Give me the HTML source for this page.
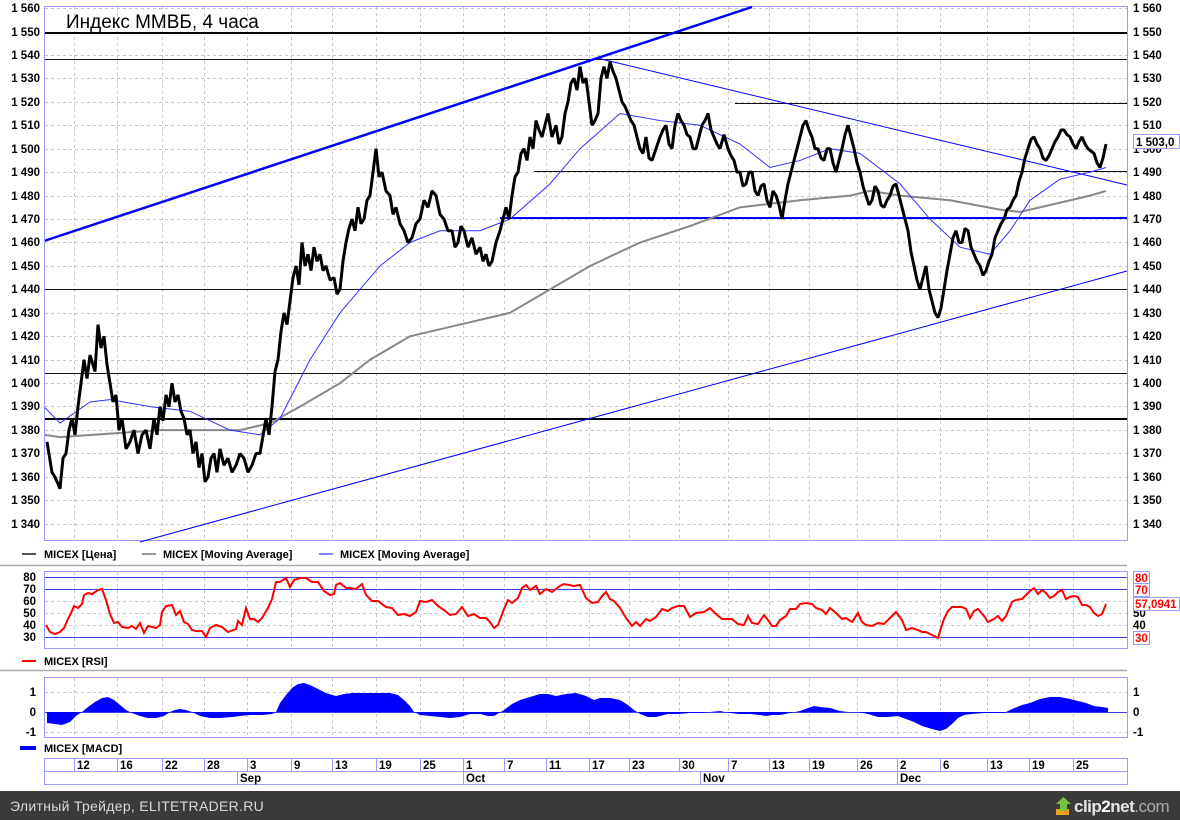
<!DOCTYPE html>
<html><head><meta charset="utf-8"><style>
html,body{margin:0;padding:0;width:1180px;height:820px;overflow:hidden;background:#fff}
svg{display:block}
text{font-family:"Liberation Sans",sans-serif}
.ax{font-size:11.5px;font-weight:bold;fill:#000}
.lg{font-size:11px;font-weight:bold;fill:#000}
</style></head><body>
<svg width="1180" height="820" viewBox="0 0 1180 820" xmlns="http://www.w3.org/2000/svg">
<rect width="1180" height="820" fill="#fff"/>
<rect x="44.5" y="6.5" width="1083" height="534" fill="none" stroke="#9a9aff"/>
<g stroke="#c8c8c8" stroke-dasharray="3,3" stroke-width="1">
<path d="M74.5 7V540M117.5 7V540M162.5 7V540M204.5 7V540M247.5 7V540M291.5 7V540M332.5 7V540M376.5 7V540M420.5 7V540M463.5 7V540M504.5 7V540M546.5 7V540M589.5 7V540M629.5 7V540M679.5 7V540M728.5 7V540M769.5 7V540M809.5 7V540M857.5 7V540M897.5 7V540M940.5 7V540M987.5 7V540M1029.5 7V540M1073.5 7V540"/>
<path d="M45 8.5H1127M45 55.5H1127M45 78.5H1127M45 102.5H1127M45 125.5H1127M45 149.5H1127M45 172.5H1127M45 196.5H1127M45 219.5H1127M45 242.5H1127M45 266.5H1127M45 289.5H1127M45 313.5H1127M45 336.5H1127M45 360.5H1127M45 383.5H1127M45 406.5H1127M45 430.5H1127M45 453.5H1127M45 477.5H1127M45 500.5H1127M45 524.5H1127"/>
</g>
<g fill="none">
<path d="M45 33H1127" stroke="#000" stroke-width="2"/>
<path d="M45 59.5H1127" stroke="#111" stroke-width="1"/>
<path d="M735 103.5H1127" stroke="#111"/>
<path d="M534 171.5H1127" stroke="#111"/>
<path d="M500 218H1127" stroke="#0000ff" stroke-width="2"/>
<path d="M45 289.5H1127" stroke="#111"/>
<path d="M45 373.5H1127" stroke="#111"/>
<path d="M45 419H1127" stroke="#000" stroke-width="2"/>
<path d="M44 241L752 7" stroke="#0000ff" stroke-width="2.5"/>
<path d="M597 58L1127 185" stroke="#0000ff" stroke-width="1"/>
<path d="M140 542L1127 271" stroke="#0000ff" stroke-width="1"/>
</g>
<g transform="translate(0,3666.2) scale(1,-2.345)" fill="none">
<polyline vector-effect="non-scaling-stroke" stroke="#888" stroke-width="2" points="44,1378 60,1377 160,1380 240,1380 270,1383 300,1390 340,1400 370,1410 410,1420 460,1425 510,1430 550,1440 590,1450 640,1460 690,1467 740,1475 800,1478 850,1480 870,1482 900,1480 950,1478 1000,1474 1020,1473 1050,1476 1090,1480 1106,1482"/>
<polyline vector-effect="non-scaling-stroke" stroke="#3030ff" stroke-width="1" points="44,1390 60,1383 90,1392 110,1393 150,1390 190,1388 230,1380 260,1378 280,1385 310,1410 340,1430 380,1450 410,1460 440,1465 480,1465 510,1470 550,1485 580,1500 620,1515 660,1512 700,1510 740,1502 770,1492 800,1495 830,1500 860,1498 900,1485 930,1470 960,1458 990,1455 1010,1465 1030,1478 1060,1487 1090,1490 1106,1492"/>
<polyline vector-effect="non-scaling-stroke" stroke="#000" stroke-width="3" stroke-linejoin="bevel" points="47,1375 52,1362 55,1360 60,1355 63,1368 66,1370 69,1380 72,1385 75,1378 78,1390 84,1410 87,1402 90,1412 95,1405 98,1425 101,1415 104,1420 107,1408 110,1400 113,1392 116,1395 119,1380 122,1385 126,1372 130,1375 134,1380 138,1370 142,1378 146,1380 150,1372 154,1385 157,1378 160,1390 163,1384 166,1395 169,1390 172,1400 175,1392 178,1395 181,1388 184,1385 187,1378 190,1380 193,1370 196,1375 199,1364 202,1370 205,1358 208,1360 211,1368 214,1370 217,1362 220,1372 224,1365 228,1368 232,1362 236,1365 240,1370 244,1368 248,1362 252,1365 256,1370 260,1370 264,1380 266,1385 269,1378 272,1390 275,1405 278,1410 281,1422 284,1430 287,1425 290,1435 293,1445 296,1450 299,1442 302,1460 305,1450 308,1455 311,1448 314,1458 317,1452 320,1455 323,1448 326,1450 330,1444 334,1445 337,1438 340,1440 343,1452 346,1460 349,1466 352,1470 355,1465 358,1475 361,1468 364,1470 367,1478 370,1480 373,1490 376,1500 379,1488 382,1490 386,1482 390,1480 393,1472 396,1475 400,1468 404,1465 408,1460 412,1462 416,1468 420,1470 424,1478 428,1475 432,1482 436,1480 440,1472 444,1470 448,1465 452,1465 455,1458 458,1460 461,1467 464,1465 468,1458 472,1462 476,1455 480,1458 483,1452 486,1455 489,1450 492,1452 496,1460 500,1465 503,1470 506,1475 509,1470 512,1480 515,1488 518,1490 521,1498 524,1500 527,1495 530,1505 533,1500 536,1512 539,1508 542,1505 545,1510 548,1515 552,1505 556,1510 559,1502 562,1505 565,1515 568,1520 571,1528 574,1530 577,1525 580,1535 583,1528 586,1530 589,1520 592,1510 595,1512 598,1515 601,1530 604,1535 607,1530 610,1537 613,1533 616,1530 619,1525 622,1520 625,1518 628,1515 631,1512 634,1510 637,1505 640,1500 643,1498 646,1505 649,1496 652,1495 656,1500 660,1505 663,1508 666,1510 669,1502 672,1500 675,1510 678,1515 681,1512 684,1510 687,1506 690,1505 693,1500 696,1500 699,1505 702,1510 705,1512 708,1515 711,1508 714,1505 717,1502 720,1500 724,1506 728,1500 731,1497 734,1495 737,1490 740,1490 743,1484 746,1485 749,1490 752,1490 755,1482 758,1480 761,1484 764,1485 767,1478 770,1475 773,1482 776,1480 779,1476 782,1470 785,1478 788,1485 791,1490 794,1495 797,1500 800,1505 803,1510 806,1512 809,1508 812,1505 815,1500 818,1500 821,1496 824,1495 827,1500 830,1500 833,1494 836,1490 839,1495 842,1500 845,1506 848,1510 851,1505 854,1500 857,1494 860,1490 863,1484 866,1480 869,1476 872,1478 875,1484 878,1482 881,1476 884,1475 887,1478 890,1480 893,1484 896,1485 899,1480 902,1475 905,1470 908,1465 911,1456 914,1450 917,1444 920,1440 923,1445 926,1450 929,1440 932,1435 935,1430 938,1428 941,1432 944,1440 947,1448 950,1455 953,1462 956,1465 959,1460 962,1460 965,1466 968,1465 971,1458 974,1455 977,1452 980,1450 983,1446 986,1448 989,1452 992,1455 995,1462 998,1465 1001,1468 1004,1470 1007,1474 1010,1475 1013,1478 1016,1480 1019,1486 1022,1490 1025,1496 1028,1500 1031,1504 1034,1505 1037,1502 1040,1500 1043,1496 1046,1495 1049,1497 1052,1500 1055,1503 1058,1505 1061,1508 1064,1508 1067,1506 1070,1505 1073,1502 1076,1500 1079,1503 1082,1505 1085,1502 1088,1500 1091,1499 1094,1498 1097,1494 1100,1492 1103,1496 1106,1502"/>
</g>
<text x="66" y="28" font-size="19" fill="#000">Индекс ММВБ, 4 часа</text>
<g stroke="#9a9aff"><path d="M44.5 6V541M1127.5 6V541"/></g>
<g class="ax" text-anchor="end">
<text x="40" y="12">1 560</text><text x="40" y="36">1 550</text><text x="40" y="59">1 540</text><text x="40" y="82">1 530</text><text x="40" y="106">1 520</text><text x="40" y="129">1 510</text><text x="40" y="153">1 500</text><text x="40" y="176">1 490</text><text x="40" y="200">1 480</text><text x="40" y="223">1 470</text><text x="40" y="246">1 460</text><text x="40" y="270">1 450</text><text x="40" y="293">1 440</text><text x="40" y="317">1 430</text><text x="40" y="340">1 420</text><text x="40" y="364">1 410</text><text x="40" y="387">1 400</text><text x="40" y="410">1 390</text><text x="40" y="434">1 380</text><text x="40" y="457">1 370</text><text x="40" y="481">1 360</text><text x="40" y="504">1 350</text><text x="40" y="528">1 340</text>
</g>
<g class="ax">
<text x="1133" y="12">1 560</text><text x="1133" y="36">1 550</text><text x="1133" y="59">1 540</text><text x="1133" y="82">1 530</text><text x="1133" y="106">1 520</text><text x="1133" y="129">1 510</text><text x="1133" y="153">1 500</text><text x="1133" y="176">1 490</text><text x="1133" y="200">1 480</text><text x="1133" y="223">1 470</text><text x="1133" y="246">1 460</text><text x="1133" y="270">1 450</text><text x="1133" y="293">1 440</text><text x="1133" y="317">1 430</text><text x="1133" y="340">1 420</text><text x="1133" y="364">1 410</text><text x="1133" y="387">1 400</text><text x="1133" y="410">1 390</text><text x="1133" y="434">1 380</text><text x="1133" y="457">1 370</text><text x="1133" y="481">1 360</text><text x="1133" y="504">1 350</text><text x="1133" y="528">1 340</text>
</g>
<rect x="1133.5" y="134.5" width="46" height="14" fill="#fff" stroke="#9a9aff"/>
<text x="1136" y="146" class="ax">1 503,0</text>
<path d="M22 554H36" stroke="#555" stroke-width="2"/><text x="44" y="558" class="lg">MICEX [Цена]</text>
<path d="M142 554H156" stroke="#999" stroke-width="2"/><text x="163" y="558" class="lg">MICEX [Moving Average]</text>
<path d="M319 554H333" stroke="#8080ff" stroke-width="2"/><text x="340" y="558" class="lg">MICEX [Moving Average]</text>
<path d="M0 565.5H1127" stroke="#aaa" stroke-width="1.5"/>
<rect x="44.5" y="571.5" width="1083" height="77" fill="none" stroke="#9a9aff"/>
<g stroke="#c8c8c8" stroke-dasharray="3,3"><path d="M74.5 572V648M117.5 572V648M162.5 572V648M204.5 572V648M247.5 572V648M291.5 572V648M332.5 572V648M376.5 572V648M420.5 572V648M463.5 572V648M504.5 572V648M546.5 572V648M589.5 572V648M629.5 572V648M679.5 572V648M728.5 572V648M769.5 572V648M809.5 572V648M857.5 572V648M897.5 572V648M940.5 572V648M987.5 572V648M1029.5 572V648M1073.5 572V648M45 601.5H1127M45 613.5H1127M45 625.5H1127"/></g>
<path d="M45 577.5H1127M45 589.5H1127M45 637.5H1127" stroke="#4040e0" stroke-width="1"/>
<polyline fill="none" stroke="#f00" stroke-width="2" points="46,625 50,632 55,634 60,632 64,628 68,619 72,611 74,606 78,608 82,604 84,595 88,593 92,594 98,590 102,589 106,600 110,614 114,623 118,622 122,627 128,628 132,626 136,629 140,623 144,633 148,626 152,627 156,628 160,625 162,612 166,606 172,605 176,615 180,611 184,622 188,624 192,630 196,631 202,631 206,637 210,628 216,625 222,627 228,632 236,629 238,621 242,625 246,608 250,619 254,619 258,622 262,618 268,608 272,599 276,582 280,582 286,578 290,587 294,580 300,578 306,578 312,582 318,582 324,591 330,595 334,594 336,585 340,583 346,588 350,588 356,589 362,584 366,595 372,601 378,601 386,607 392,608 398,615 404,614 410,616 416,612 420,601 426,602 432,600 438,606 444,610 450,615 456,614 462,607 468,616 474,614 480,618 486,618 490,622 494,628 498,625 504,609 508,600 512,603 518,598 522,588 526,585 530,590 536,586 540,594 546,589 552,592 560,586 564,584 574,586 580,585 586,598 592,603 598,602 602,596 606,592 610,599 614,601 620,608 626,618 632,626 636,622 640,626 646,619 650,621 656,617 662,609 668,611 672,608 678,606 684,606 690,617 696,613 704,612 710,608 716,614 722,619 726,619 732,619 738,624 744,625 748,616 752,623 758,624 764,615 768,620 772,626 776,626 780,620 786,616 790,609 796,609 800,604 806,603 812,604 816,608 822,610 826,614 830,608 836,613 842,619 846,618 852,622 858,613 862,622 866,625 872,626 878,623 884,624 890,618 896,612 902,620 906,630 912,628 918,630 922,632 926,632 932,635 938,638 940,631 944,619 948,611 952,607 956,607 962,607 966,609 970,618 974,611 978,609 984,616 988,622 994,619 998,616 1002,621 1006,616 1012,602 1016,600 1022,599 1026,595 1030,591 1034,588 1038,594 1042,590 1046,593 1050,598 1054,596 1058,592 1062,590 1066,599 1070,597 1074,596 1078,597 1082,605 1086,605 1090,607 1094,613 1098,616 1102,614 1106,604"/>
<g class="ax" text-anchor="end"><text x="36" y="581">80</text><text x="36" y="593">70</text><text x="36" y="605">60</text><text x="36" y="617">50</text><text x="36" y="629">40</text><text x="36" y="641">30</text></g>
<g class="ax"><text x="1133" y="617">50</text><text x="1133" y="629">40</text></g>
<g font-size="11.5" font-weight="bold" fill="#f00">
<rect x="1133.5" y="571.5" width="16" height="13" fill="#fff" stroke="#9a9aff"/><text x="1135" y="582">80</text>
<rect x="1133.5" y="583.5" width="16" height="13" fill="#fff" stroke="#9a9aff"/><text x="1135" y="594">70</text>
<rect x="1133.5" y="597.5" width="46" height="13" fill="#fff" stroke="#9a9aff"/><text x="1135" y="608">57,0941</text>
<rect x="1133.5" y="631.5" width="16" height="13" fill="#fff" stroke="#9a9aff"/><text x="1135" y="642">30</text>
</g>
<path d="M22 661H36" stroke="#f00" stroke-width="2"/><text x="44" y="665" class="lg">MICEX [RSI]</text>
<path d="M0 670.5H1127" stroke="#aaa" stroke-width="1.5"/>
<rect x="44.5" y="677.5" width="1083" height="60" fill="none" stroke="#9a9aff"/>
<g stroke="#c8c8c8" stroke-dasharray="3,3"><path d="M74.5 678V737M117.5 678V737M162.5 678V737M204.5 678V737M247.5 678V737M291.5 678V737M332.5 678V737M376.5 678V737M420.5 678V737M463.5 678V737M504.5 678V737M546.5 678V737M589.5 678V737M629.5 678V737M679.5 678V737M728.5 678V737M769.5 678V737M809.5 678V737M857.5 678V737M897.5 678V737M940.5 678V737M987.5 678V737M1029.5 678V737M1073.5 678V737M45 692.5H1127M45 732.5H1127"/></g>
<path d="M45 712.5H1127" stroke="#4040e0"/>
<polygon fill="#0000ff" points="47,712 47,723 55,724 62,725 70,722 76,716 82,712 88,707 95,702 102,698 108,697 114,700 120,705 126,710 132,713 140,716 148,718 156,718 164,716 170,712 175,710 180,709 186,710 192,712 200,716 210,718 220,718 232,717 240,716 250,715 262,715 272,714 276,712 280,703 286,695 292,688 298,684 304,683 310,685 318,689 326,693 336,696 344,694 352,693 360,693 370,693 380,693 390,693 398,695 404,700 410,706 414,712 420,715 430,716 440,717 450,718 460,717 470,714 480,714 488,716 494,716 504,710 512,704 520,700 530,697 540,694 548,694 556,696 566,694 576,693 586,696 594,700 600,698 610,698 620,700 628,705 634,710 640,714 648,717 656,717 668,714 678,714 690,713 700,713 710,712 720,711 730,713 740,714 750,714 760,715 766,716 772,715 780,715 790,713 800,711 808,708 814,706 820,707 830,708 840,711 848,712 858,712 868,714 878,717 888,717 898,716 906,719 914,722 922,726 932,729 940,731 946,729 952,724 958,718 964,715 972,714 984,713 996,713 1004,713 1012,709 1022,705 1030,703 1040,699 1050,697 1060,697 1070,699 1078,701 1086,703 1094,706 1102,707 1108,708 1108,712"/>
<g class="ax" text-anchor="end"><text x="36" y="696">1</text><text x="36" y="716">0</text><text x="36" y="736">-1</text></g>
<g class="ax"><text x="1133" y="696">1</text><text x="1133" y="716">0</text><text x="1133" y="736">-1</text></g>
<path d="M20 748H36" stroke="#0000ff" stroke-width="4"/><text x="44" y="752" class="lg">MICEX [MACD]</text>
<g fill="none" stroke="#9a9aff"><rect x="44.5" y="758.5" width="1083" height="26"/><path d="M45 771.5H1127M74.5 758V771M117.5 758V771M162.5 758V771M204.5 758V771M247.5 758V771M291.5 758V771M332.5 758V771M376.5 758V771M420.5 758V771M463.5 758V785M504.5 758V771M546.5 758V771M589.5 758V771M629.5 758V771M679.5 758V771M728.5 758V771M769.5 758V771M809.5 758V771M857.5 758V771M897.5 758V785M940.5 758V771M987.5 758V771M1029.5 758V771M1073.5 758V771M237.5 771V785M700.5 771V785"/></g>
<g class="ax">
<text x="77" y="769">12</text><text x="120" y="769">16</text><text x="165" y="769">22</text><text x="207" y="769">28</text><text x="250" y="769">3</text><text x="294" y="769">9</text><text x="335" y="769">13</text><text x="379" y="769">19</text><text x="423" y="769">25</text><text x="466" y="769">1</text><text x="507" y="769">7</text><text x="549" y="769">11</text><text x="592" y="769">17</text><text x="632" y="769">23</text><text x="682" y="769">30</text><text x="731" y="769">7</text><text x="772" y="769">13</text><text x="812" y="769">19</text><text x="860" y="769">26</text><text x="900" y="769">2</text><text x="943" y="769">6</text><text x="990" y="769">13</text><text x="1032" y="769">19</text><text x="1076" y="769">25</text>
<text x="240" y="782">Sep</text><text x="466" y="782">Oct</text><text x="703" y="782">Nov</text><text x="900" y="782">Dec</text>
</g>
<rect x="0" y="791" width="1180" height="29" fill="#3b3b3b"/>
<text x="10" y="811" font-size="14" fill="#d8d8d8" letter-spacing="0.3">Элитный Трейдер, ELITETRADER.RU</text>
<g transform="translate(1056,797)">
<rect x="0" y="12" width="13" height="6" fill="#e8a020"/>
<path d="M4 12V7H0L7.5 0 15 7H11V14H4Z" fill="#7ac143"/>
</g>
<text x="1074" y="812" font-size="17" font-weight="bold" fill="#e6e6e6" letter-spacing="-0.5">clip<tspan fill="#fff">2</tspan>net<tspan fill="#aaa" font-weight="normal">.com</tspan></text>
</svg>
</body></html>
